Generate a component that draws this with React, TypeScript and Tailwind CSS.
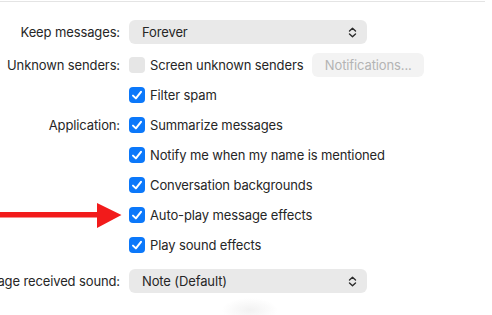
import React from "react";

const font = { fontFamily: "Inter, 'Liberation Sans', sans-serif", letterSpacing: "-0.12px" };

function Check({ checked = true }: { checked?: boolean }) {
  if (!checked) return <div className="w-[16px] h-[16px] rounded-[4px] bg-[#e6e6e6] shrink-0" />;
  return (
    <div className="w-[16px] h-[16px] rounded-[4px] bg-[#0b78fa] shrink-0 flex items-center justify-center">
      <svg width="16" height="16" viewBox="0 0 16 16">
        <path d="M4 8.6 L6.9 11.4 L12 4.8" fill="none" stroke="white" strokeWidth="2" strokeLinecap="round" strokeLinejoin="round" />
      </svg>
    </div>
  );
}

function Chevrons() {
  return (
    <svg width="9" height="11" viewBox="0 0 9 11">
      <path d="M1.5 4 L4.5 1.3 L7.5 4" fill="none" stroke="#2b2b2b" strokeWidth="1.4" strokeLinecap="round" strokeLinejoin="round" />
      <path d="M1.5 7 L4.5 9.7 L7.5 7" fill="none" stroke="#2b2b2b" strokeWidth="1.4" strokeLinecap="round" strokeLinejoin="round" />
    </svg>
  );
}

function Label({ text }: { text?: string }) {
  return (
    <div className="w-[120px] shrink-0 flex justify-end whitespace-nowrap text-[13px] text-[#262626] pt-[2px]">
      {text ?? ""}
    </div>
  );
}

function Popup({ value }: { value: string }) {
  return (
    <div className="w-[238px] h-[24px] rounded-[6px] bg-[#e9e9e9] flex items-center justify-between pl-[13px] pr-[10px] text-[13px] text-[#262626]">
      <span className="pt-[2px]">{value}</span>
      <Chevrons />
    </div>
  );
}

function CheckRow({ label, text, checked = true }: { label?: string; text: string; checked?: boolean }) {
  return (
    <div className="h-[30px] flex items-center gap-[9px]">
      <Label text={label} />
      <div className="flex items-center gap-[5px] text-[13px] text-[#262626] whitespace-nowrap">
        <Check checked={checked} />
        <span className="pt-[2px]">{text}</span>
      </div>
    </div>
  );
}

export default function App() {
  return (
    <div className="relative w-[492px] h-[315px] bg-white overflow-hidden" style={font}>
      <div className="h-[1px] mt-[1px] w-[485px] bg-[#e4e4e4]" />
      <div className="flex flex-col pt-[18px]">
        <div className="h-[24px] flex items-center gap-[9px]">
          <Label text="Keep messages:" />
          <Popup value="Forever" />
        </div>
        <div className="h-[24px] mt-[9px] flex items-center gap-[9px]">
          <Label text="Unknown senders:" />
          <div className="flex items-center gap-[5px] text-[13px] text-[#262626] whitespace-nowrap">
            <Check checked={false} />
            <span className="pt-[2px]">Screen unknown senders</span>
          </div>
          <div className="ml-[auto] mr-[68px] w-[112px] h-[24px] rounded-[6px] bg-[#f3f3f3] flex items-center justify-center text-[13px] text-[#b4b4b4] pt-[2px]">
            Notifications...
          </div>
        </div>
        <div className="mt-[3px]" />
        <CheckRow text="Filter spam" />
        <CheckRow label="Application:" text="Summarize messages" />
        <CheckRow text="Notify me when my name is mentioned" />
        <CheckRow text="Conversation backgrounds" />
        <CheckRow text="Auto-play message effects" />
        <CheckRow text="Play sound effects" />
        <div className="h-[24px] mt-[9px] flex items-center gap-[9px]">
          <Label text="Message received sound:" />
          <Popup value="Note (Default)" />
        </div>
      </div>
      <div className="absolute left-[222px] top-[298px] w-[56px] h-[24px] rounded-full bg-[radial-gradient(closest-side,#f2f2f2,transparent)]" />
      <svg className="absolute left-0 top-[200px]" width="125" height="32" viewBox="0 0 125 32">
        <path d="M0 12 L97 12 L97 3 L121.5 15 L97 28 L97 17.5 L0 17.5 Z" fill="#f21b1b" />
      </svg>
    </div>
  );
}
